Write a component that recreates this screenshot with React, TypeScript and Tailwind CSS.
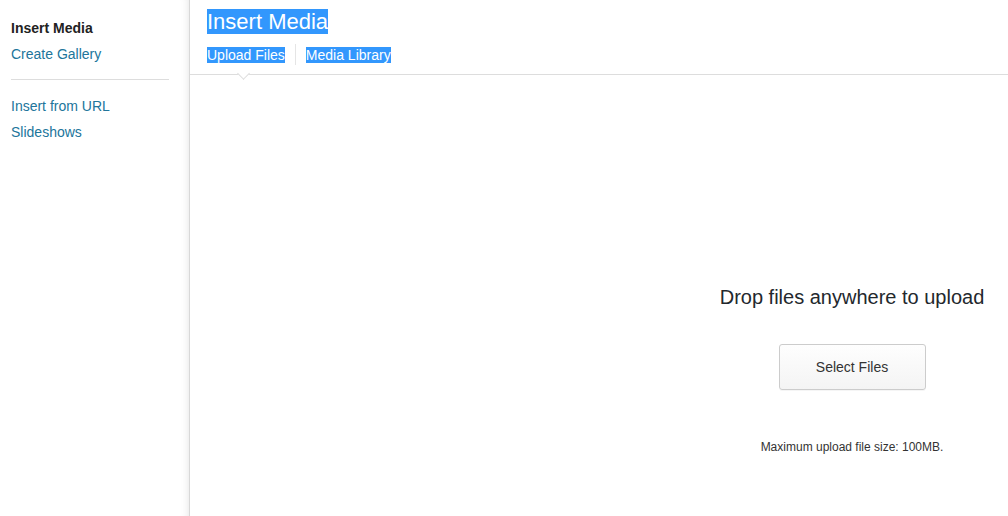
import React from "react";

const sel = "bg-[#3297fd] text-white";

export default function App() {
  return (
    <div className="flex h-[516px] w-[1008px] bg-white font-['Liberation_Sans',Arial,sans-serif] text-[#333]">
      {/* Sidebar */}
      <div className="w-[190px] shrink-0 border-r border-[#d8d8d8] shadow-[inset_-8px_0_8px_-8px_rgba(0,0,0,0.12)]">
        <div className="px-[11px] pt-[19px]">
          <div className="text-[14px] leading-[18px] font-bold text-[#222]">Insert Media</div>
          <div className="mt-[8px] text-[14px] leading-[18px] text-[#21759b]">Create Gallery</div>
          <div className="mt-[16px] mb-[17px] h-px w-[158px] bg-[#dddddd]" />
          <div className="text-[14px] leading-[18px] text-[#21759b]">Insert from URL</div>
          <div className="mt-[8px] text-[14px] leading-[18px] text-[#21759b]">Slideshows</div>
        </div>
      </div>

      {/* Main */}
      <div className="flex flex-1 flex-col">
        <div className="relative h-[75px] border-b border-[#dddddd] px-[17px]">
          <div className="pt-[9px]">
            <span className={`${sel} inline-block text-[22px] leading-[25px]`}>Insert Media</span>
          </div>
          <div className="mt-[8px] flex items-center">
            <span className={`${sel} text-[14px] leading-[16px]`}>Upload Files</span>
            <span className="mx-[10px] h-[21px] w-px bg-[#e5e5e5]" />
            <span className={`${sel} text-[14px] leading-[16px]`}>Media Library</span>
          </div>
          <div className="absolute left-[49px] top-[69px] h-[9px] w-[9px] rotate-45 border-b border-r border-[#dddddd] bg-white" />
        </div>

        <div className="flex flex-1 justify-end">
          <div className="flex w-[312px] flex-col items-center pt-[210px]">
            <div className="text-[20px] leading-[24px] text-[#23282d]">Drop files anywhere to upload</div>
            <button className="mt-[35px] h-[46px] w-[147px] rounded-[3px] border border-[#cccccc] bg-gradient-to-b from-[#fefefe] to-[#f4f4f4] text-[14px] text-[#333] shadow-[0_1px_0_rgba(0,0,0,0.04)]">
              Select Files
            </button>
            <div className="mt-[50px] text-[12px] leading-[15px] text-[#333]">Maximum upload file size: 100MB.</div>
          </div>
        </div>
      </div>
    </div>
  );
}
